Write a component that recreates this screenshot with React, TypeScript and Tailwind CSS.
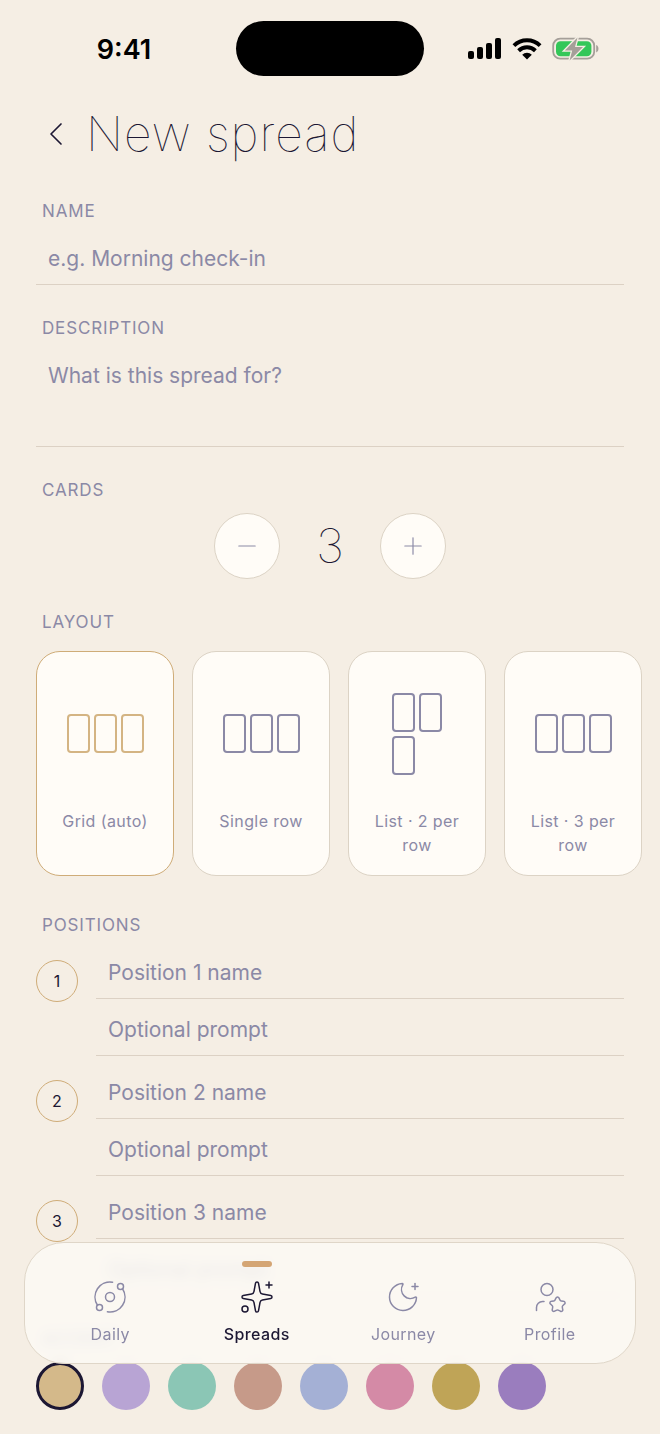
import { useState } from "react";
import type { ReactNode } from "react";
import { ChevronLeft, Minus, MoonStar, Orbit, Plus, Sparkles, UserStar } from "lucide-react";

const LAYOUTS = [
  { id: "grid", label: "Grid (auto)", perRow: 3 },
  { id: "row", label: "Single row", perRow: 3 },
  { id: "list-2", label: "List · 2 per row", perRow: 2 },
  { id: "list-3", label: "List · 3 per row", perRow: 3 },
];

const COLORS = [
  { name: "Sand", swatch: "bg-[#d4b98a]" },
  { name: "Lavender", swatch: "bg-[#b8a4d4]" },
  { name: "Mint", swatch: "bg-[#8bc6b5]" },
  { name: "Clay", swatch: "bg-[#c69a89]" },
  { name: "Sky", swatch: "bg-[#a4b0d5]" },
  { name: "Rose", swatch: "bg-[#d48aa6]" },
  { name: "Gold", swatch: "bg-[#bfa457]" },
  { name: "Violet", swatch: "bg-[#9a7dbe]" },
];

const TABS = [
  { name: "Daily", icon: Orbit },
  { name: "Spreads", icon: Sparkles },
  { name: "Journey", icon: MoonStar },
  { name: "Profile", icon: UserStar },
];

const labelClass = "block px-1.5 text-[17px] leading-[22px] tracking-wider text-[#8b89a6] uppercase";
const fieldClass =
  "block w-full border-b border-[#dcd1c4] bg-transparent px-3 text-[21px] text-[#1c1733] outline-none placeholder:text-[#8b89a6] placeholder:opacity-100";

function StatusBar() {
  return (
    <div className="grid grid-cols-[1fr_188px_1fr] items-center pt-[21px] text-black">
      <span className="pt-1 pl-3 text-center text-[27px] font-semibold">9:41</span>
      <div className="h-[55px] rounded-full bg-black" />
      <div className="flex items-center justify-center gap-2.5 pr-4">
        <svg width="34" height="22" viewBox="0 0 34 22" aria-hidden="true">
          <rect x="0" y="13" width="6" height="8" rx="2" />
          <rect x="9" y="9" width="6" height="12" rx="2" />
          <rect x="18" y="5" width="6" height="16" rx="2" />
          <rect x="27" y="0" width="6" height="21" rx="2" />
        </svg>
        <svg width="30" height="22" viewBox="0 0 30 22" fill="none" stroke="black" strokeWidth="4" aria-hidden="true">
          <path d="M1.9 7.6a19 19 0 0 1 26.2 0" />
          <path d="M6.6 12.7a12.2 12.2 0 0 1 16.8 0" />
          <path d="M10.2 16.7a6.8 6.8 0 0 1 9.6 0L15 21.5z" fill="black" stroke="none" />
        </svg>
        <svg width="48" height="26" viewBox="0 0 48 26" aria-hidden="true">
          <rect x="1.2" y="2.7" width="41" height="20" rx="7" fill="none" stroke="#a59f99" strokeWidth="1.8" />
          <rect x="4" y="5.2" width="35.4" height="15" rx="4.5" fill="#34c759" />
          <path d="M44.2 9c3 1.2 3 6.2 0 7.4z" fill="#a59f99" />
          <path
            d="M25.5 1.5 12.8 14.5h7.4L17.6 24.5 31 11h-8z"
            fill="#a59f99"
            stroke="#f5eee4"
            strokeWidth="2.6"
            paintOrder="stroke"
          />
        </svg>
      </div>
    </div>
  );
}

function RoundButton({ label, onClick, children }: { label: string; onClick: () => void; children: ReactNode }) {
  return (
    <button
      type="button"
      aria-label={label}
      onClick={onClick}
      className="flex size-[66px] items-center justify-center rounded-full border border-[#dcd3c5] bg-[#fffcf7] text-[#8b89a6]"
    >
      {children}
    </button>
  );
}

function LayoutPreview({ perRow, selected }: { perRow: number; selected: boolean }) {
  const border = selected ? "border-[#d4b483]" : "border-[#8b89a6]";
  return (
    <span className={perRow === 2 ? "grid grid-cols-2 gap-1" : "grid grid-cols-3 gap-1"}>
      {[0, 1, 2].map((i) => (
        <span key={i} className={`h-[39px] w-[23px] rounded border-2 ${border}`} />
      ))}
    </span>
  );
}

export default function App() {
  const [count, setCount] = useState(3);
  const [layout, setLayout] = useState("grid");
  const [color, setColor] = useState("Sand");
  const [tab, setTab] = useState("Spreads");

  return (
    <div className="min-h-screen bg-[#f5eee4] font-['Inter','Liberation_Sans',sans-serif] text-[#1c1733] antialiased">
      <StatusBar />

      <header className="flex items-center gap-2.5 px-9 pt-[29px]">
        <button type="button" aria-label="Back">
          <ChevronLeft size={40} strokeWidth={1} />
        </button>
        <h1 className="text-5xl leading-[58px] font-thin tracking-[1px]">New spread</h1>
      </header>

      <form className="flex flex-col gap-8 pt-[37px] pb-6" onSubmit={(e) => e.preventDefault()}>
        <div className="flex flex-col gap-3 px-9">
          <label htmlFor="spread-name" className={labelClass}>Name</label>
          <input id="spread-name" placeholder="e.g. Morning check-in" className={`${fieldClass} h-[51px] pb-0.5`} />
        </div>

        <div className="flex flex-col gap-3 px-9">
          <label htmlFor="spread-description" className={labelClass}>Description</label>
          <textarea
            id="spread-description"
            placeholder="What is this spread for?"
            className={`${fieldClass} h-24 resize-none py-3 leading-[26px]`}
          />
        </div>

        <div className="flex flex-col gap-3 px-9">
          <h2 className={labelClass}>Cards</h2>
          <div className="flex items-center justify-center gap-9">
            <RoundButton label="Fewer cards" onClick={() => setCount(Math.max(1, count - 1))}>
              <Minus size={28} strokeWidth={1} />
            </RoundButton>
            <output className="w-7 text-center text-5xl font-thin">{count}</output>
            <RoundButton label="More cards" onClick={() => setCount(count + 1)}>
              <Plus size={28} strokeWidth={1} />
            </RoundButton>
          </div>
        </div>

        <fieldset className="min-w-0">
          <legend className={`${labelClass} ml-9`}>Layout</legend>
          <div className="flex gap-[18px] overflow-x-auto px-9 pt-[18px] pb-1.5 [scrollbar-width:none]">
            {LAYOUTS.map((item) => {
              const selected = item.id === layout;
              return (
                <label
                  key={item.id}
                  className={`flex h-[225px] w-[138px] shrink-0 cursor-pointer flex-col items-center rounded-3xl border bg-[#fffcf7] px-3 pt-[23px] ${
                    selected ? "border-[#cfac78]" : "border-[#dcd3c5]"
                  }`}
                >
                  <input
                    type="radio"
                    name="layout"
                    className="sr-only"
                    checked={selected}
                    onChange={() => setLayout(item.id)}
                  />
                  <span className="flex h-[117px] items-center">
                    <LayoutPreview perRow={item.perRow} selected={selected} />
                  </span>
                  <span className="mt-[17px] text-center text-base leading-6 tracking-wide text-[#8b89a6]">
                    {item.label}
                  </span>
                </label>
              );
            })}
          </div>
        </fieldset>

        <div className="flex flex-col gap-3 px-9">
          <h2 className={labelClass}>Positions</h2>
          <ol className="flex flex-col gap-3">
            {Array.from({ length: count }, (_, i) => i + 1).map((n) => (
              <li key={n} className="flex gap-[18px]">
                <span className="mt-3 flex size-[42px] shrink-0 items-center justify-center rounded-full border border-[#cfac78] text-base">
                  {n}
                </span>
                <div className="flex grow flex-col gap-1.5">
                  <input
                    aria-label={`Position ${n} name`}
                    placeholder={`Position ${n} name`}
                    className={`${fieldClass} h-[51px] pb-0.5`}
                  />
                  <input
                    aria-label={`Position ${n} prompt`}
                    placeholder="Optional prompt"
                    className={`${fieldClass} h-[51px] pb-0.5`}
                  />
                </div>
              </li>
            ))}
          </ol>
        </div>

        <fieldset className="px-9">
          <legend className={labelClass}>Accent</legend>
          <div className="flex flex-wrap gap-[18px] pt-3">
            {COLORS.map((c) => (
              <input
                key={c.name}
                type="radio"
                name="color"
                aria-label={c.name}
                checked={color === c.name}
                onChange={() => setColor(c.name)}
                className={`size-12 cursor-pointer appearance-none rounded-full border-[#1c1733] checked:border-3 ${c.swatch}`}
              />
            ))}
          </div>
        </fieldset>
      </form>

      <nav className="fixed inset-x-6 bottom-[70px] grid grid-cols-4 rounded-[40px] border border-[#dfd6c8] bg-[#fcf9f4]/85 px-3 pt-[18px] pb-[17px] backdrop-blur-[6px]">
        {TABS.map(({ name, icon: Icon }) => {
          const active = name === tab;
          return (
            <button
              key={name}
              type="button"
              aria-current={active ? "page" : undefined}
              onClick={() => setTab(name)}
              className={`flex flex-col items-center ${active ? "font-medium text-[#1c1733]" : "text-[#8b89a6]"}`}
            >
              <span className={`h-1.5 w-[30px] rounded-full ${active ? "bg-[#d4a574]" : "bg-transparent"}`} />
              <Icon size={36} strokeWidth={1} className="mt-3" />
              <span className="mt-[7px] text-base leading-6 tracking-wide">{name}</span>
            </button>
          );
        })}
      </nav>
    </div>
  );
}
